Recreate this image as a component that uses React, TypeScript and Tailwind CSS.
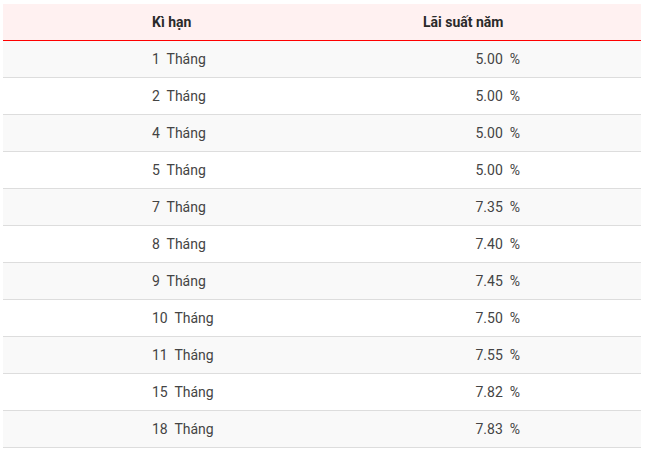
import React from "react";

const rows: [string, string][] = [
  ["1", "5.00"],
  ["2", "5.00"],
  ["4", "5.00"],
  ["5", "5.00"],
  ["7", "7.35"],
  ["8", "7.40"],
  ["9", "7.45"],
  ["10", "7.50"],
  ["11", "7.55"],
  ["15", "7.82"],
  ["18", "7.83"],
];

export default function App() {
  return (
    <div
      className="w-[647px] h-[452px] bg-white pt-[4px] pl-[3px] overflow-hidden"
      style={{ fontFamily: "Roboto, 'Liberation Sans', sans-serif" }}
    >
      <div className="w-[638px]">
        <div className="flex h-[37px] items-center bg-[#fff1f1] border-b border-[#ff0000] text-[14px] font-bold text-[#2a2a2a]">
          <div className="w-[270px] pl-[149px]">Kì hạn</div>
          <div className="flex-1 pl-[150px]">Lãi suất năm</div>
        </div>
        {rows.map(([m, r], i) => (
          <div
            key={m}
            className={`flex h-[37px] items-center border-b border-[#dddddd] text-[14px] text-[#444444] ${
              i % 2 === 0 ? "bg-[#f9f9f9]" : "bg-white"
            }`}
          >
            <div className="w-[270px] pl-[149px] whitespace-pre">{m}  Tháng</div>
            <div className="flex-1 text-right pr-[121px] whitespace-pre">{r}  %</div>
          </div>
        ))}
      </div>
    </div>
  );
}
